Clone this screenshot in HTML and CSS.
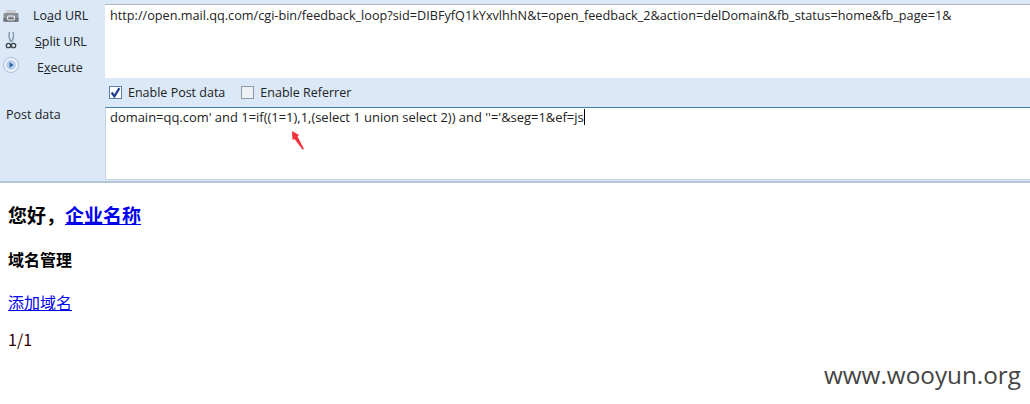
FILE: index.html
```html
<!DOCTYPE html>
<html lang="zh">
<head>
<meta charset="utf-8">
<title>Feedback loop</title>
<link rel="stylesheet" href="styles.css">
</head>
<body>
<section class="hackbar">
  <div class="top">
    <nav class="actions">
      <div class="action">
        <svg class="icon icon-print" viewBox="0 0 16 16"><path d="M3 2h10v3H3z" fill="#c9ccd0"/><path d="M0.500 6q0-1 1-1h13q1 0 1 1v7q0 1-1 1h-13q-1 0-1-1z" fill="#8b9196"/><rect x="0.500" y="10" width="15" height="3.500" fill="#70767b"/><rect x="4.500" y="8" width="7" height="4" rx="1.500" fill="none" stroke="#eceef0" stroke-width="1.200"/></svg>
        <span class="action-label label-load">Lo<u>a</u>d URL</span>
      </div>
      <div class="action">
        <svg class="icon icon-tall" viewBox="0 0 16 18"><g fill="none"><path d="M6.500 1q-1.500 5 1.500 10M10 1q1.500 5-1.500 10" stroke="#8c9cb2" stroke-width="1.600"/><circle cx="5.500" cy="14.500" r="2.200" stroke="#3d444c" stroke-width="1.300"/><circle cx="10.500" cy="14.500" r="2.200" stroke="#3d444c" stroke-width="1.300"/></g></svg>
        <span class="action-label label-split"><u>S</u>plit URL</span>
      </div>
      <div class="action">
        <svg class="icon" viewBox="0 0 16 16"><circle cx="8" cy="8" r="7.500" fill="#eef3fb" stroke="#a8bedb"/><circle cx="8" cy="8" r="5" fill="#bdd1ec"/><path d="M6.500 5 10.500 8l-4 3z" fill="#2f62ad"/></svg>
        <span class="action-label label-exec">E<u>x</u>ecute</span>
      </div>
    </nav>
    <div class="field field-url">http://open.mail.qq.com/cgi-bin/feedback_loop?sid=DIBFyfQ1kYxvlhhN&amp;t=open_feedback_2&amp;action=delDomain&amp;fb_status=home&amp;fb_page=1&amp;</div>
  </div>
  <div class="options">
    <label class="option"><span class="check is-on"><svg viewBox="0 0 10 10"><path d="M1.500 5 4 8.500 8.500 1" fill="none" stroke="#1d3f8f" stroke-width="2"/></svg></span>Enable Post data</label>
    <label class="option"><span class="check"></span>Enable Referrer</label>
  </div>
  <div class="post">
    <div class="post-label">Post data</div>
    <div class="field field-post">domain=qq.com' and 1=if((1=1),1,(select 1 union select 2)) and ''='&amp;seg=1&amp;ef=js<span class="caret"></span></div>
  </div>
</section>
<main class="page">
  <h3 class="hello">您好<span class="comma">，</span><a href="#">企业名称</a></h3>
  <h4 class="sub">域名管理</h4>
  <p class="para"><a href="#">添加域名</a></p>
  <p class="para pager">1/1</p>
</main>
<svg class="arrow" viewBox="0 0 14 20"><path d="M1 1 8 5 6.500 6.500 13 19 11.500 19.500 3.500 9 1.500 10z" fill="#f0313a"/></svg>
<div class="watermark">www.wooyun.org</div>
</body>
</html>
```
FILE: styles.css
```css
html, body {
  margin: 0;
  padding: 0;
  background: #fff;
}
body {
  position: relative;
  width: 1030px;
  height: 404px;
  overflow: hidden;
  font-family: "Noto Sans CJK SC", "Liberation Serif", serif;
  color: #000;
}
.hackbar {
  box-sizing: border-box;
  height: 183px;
  padding-top: 4px;
  background: #dae8f7;
  border-bottom: 2px solid #b4c6d8;
  font-family: "Open Sans", "Liberation Sans", sans-serif;
  font-size: 12.500px;
  color: #222;
}
.top {
  display: flex;
  height: 74px;
}
.actions {
  width: 105px;
  flex: none;
  display: flex;
  flex-direction: column;
  margin-top: -2px;
}
.action {
  display: flex;
  align-items: center;
  height: 26px;
  padding-left: 3px;
}
.icon {
  width: 16px;
  height: 16px;
  flex: none;
}
.icon-print {
  margin-top: 3px;
}
.icon-tall {
  height: 18px;
}
.action-label {
  white-space: nowrap;
  padding-top: 4px;
}
.label-load { margin-left: 14px; padding-top: 2px; }
.label-split { margin-left: 16px; }
.label-exec { margin-left: 18px; }
.field {
  flex: 1;
  box-sizing: border-box;
  background: #fff;
  padding: 1px 4px;
  line-height: 18px;
  color: #222;
  white-space: nowrap;
}
.field-url {
  border-top: 1px solid #b0b8c0;
  padding-left: 5px;
  font-size: 12.680px;
}
.options {
  display: flex;
  align-items: center;
  gap: 16px;
  height: 29px;
  padding-left: 109px;
}
.option {
  display: flex;
  align-items: center;
  gap: 6px;
}
.check {
  box-sizing: border-box;
  width: 13px;
  height: 13px;
  display: flex;
  background: #eef1f4;
  border: 1px solid #8e99a5;
}
.check.is-on {
  background: #fff;
  border-color: #5a7fa8;
}
.post {
  display: flex;
  height: 73px;
}
.post-label {
  width: 105px;
  flex: none;
  padding: 0 0 0 6px;
  box-sizing: border-box;
  line-height: 16px;
}
.field-post {
  border-top: 1px solid #3f7fa9;
  border-left: 1px solid #c6d4e2;
  border-bottom: 1px solid #c6d4e2;
  padding-top: 0;
  padding-left: 4px;
  font-size: 12.940px;
}
.caret {
  display: inline-block;
  width: 1px;
  height: 16px;
  background: #000;
  vertical-align: -3px;
}
.page {
  padding: 0 8px;
}
.hello {
  margin: 18px 0 0;
  font-size: 19px;
  line-height: 28px;
  font-weight: 700;
}
.comma {
  font-family: "Noto Sans CJK TC", sans-serif;
}
.sub {
  margin: 18px 0 0;
  font-size: 16px;
  line-height: 24px;
  font-weight: 700;
}
.para {
  margin: 19px 0 0;
  font-size: 16px;
  line-height: 24px;
}
.pager {
  margin-top: 13px;
  color: #300;
}
.hello a, .para a {
  color: #00e;
}
.arrow {
  position: absolute;
  left: 291px;
  top: 130px;
  width: 14px;
  height: 20px;
}
.watermark {
  position: absolute;
  right: 9px;
  top: 359px;
  font-family: "Open Sans", "Liberation Sans", sans-serif;
  font-size: 24.300px;
  line-height: 32px;
  color: #444;
}
```
